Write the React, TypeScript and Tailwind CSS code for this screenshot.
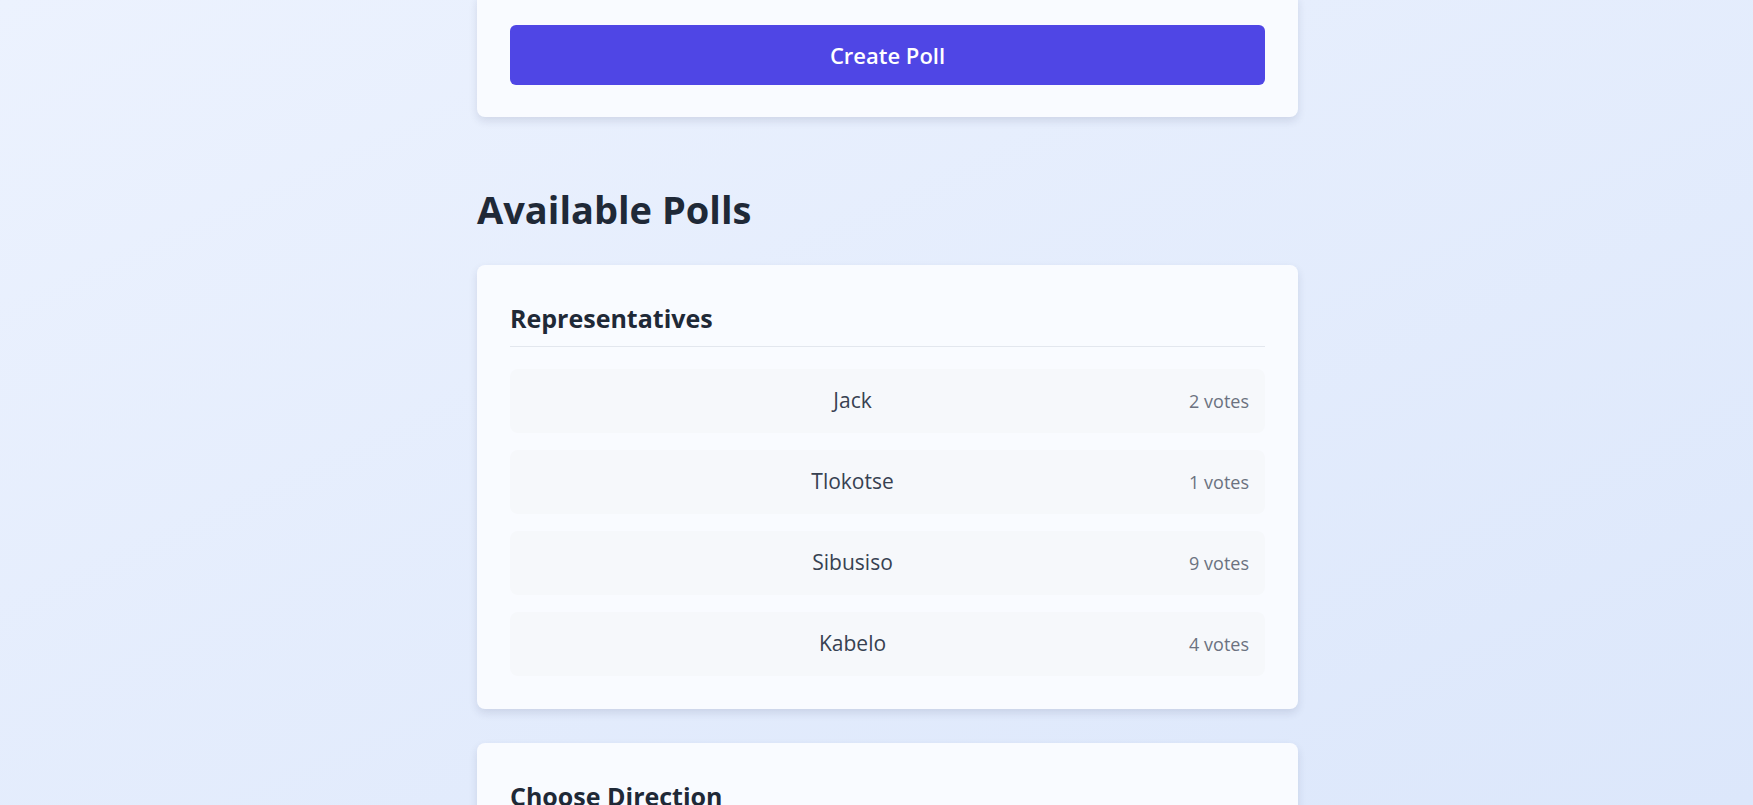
import React from "react";

const candidates = [
  { name: "Jack", votes: 2 },
  { name: "Tlokotse", votes: 1 },
  { name: "Sibusiso", votes: 9 },
  { name: "Kabelo", votes: 4 },
];

export default function App() {
  return (
    <div
      className="h-[805px] w-full overflow-hidden bg-gradient-to-br from-[#ecf2fe] to-[#dce7fb]"
      style={{ fontFamily: '"Open Sans", "Noto Sans", sans-serif' }}
    >
      <div className="ml-[477px] w-[821px]">
        {/* Create poll card (top cut off) */}
        <div className="-mt-[7px] rounded-lg bg-[#f9fbff] px-[33px] pt-[32px] pb-[32px] shadow-[0_4px_8px_rgba(30,41,80,0.12)]">
          <button className="flex h-[60px] w-full items-center justify-center rounded-md bg-[#4f46e5] text-[22px] font-semibold text-white">
            Create Poll
          </button>
        </div>

        <h2 className="mt-[72px] mb-[36px] text-[38px] leading-[40px] font-bold text-[#1f2937]">
          Available Polls
        </h2>

        <div className="rounded-lg bg-[#f9fbff] px-[33px] pt-[32px] pb-[33px] shadow-[0_4px_8px_rgba(30,41,80,0.12)]">
          <h3 className="border-b border-[#e3e7ee] pb-[7px] text-[25px] leading-[42px] font-bold text-[#1f2937]">
            Representatives
          </h3>
          <div className="mt-[22px] flex flex-col gap-[17px]">
            {candidates.map((c) => (
              <div
                key={c.name}
                className="flex h-[64px] items-center rounded-lg bg-[#f6f8fb] pl-4 pr-4"
              >
                <span className="flex-1 pr-[10px] text-center text-[21px] text-[#374151]">
                  {c.name}
                </span>
                <span className="text-[18px] text-[#6b7280]">{c.votes} votes</span>
              </div>
            ))}
          </div>
        </div>

        <div className="mt-[34px] h-[200px] rounded-lg bg-[#f9fbff] px-[33px] pt-[32px] shadow-[0_4px_8px_rgba(30,41,80,0.12)]">
          <h3 className="text-[25px] leading-[42px] font-bold text-[#1f2937]">
            Choose Direction
          </h3>
        </div>
      </div>
    </div>
  );
}
